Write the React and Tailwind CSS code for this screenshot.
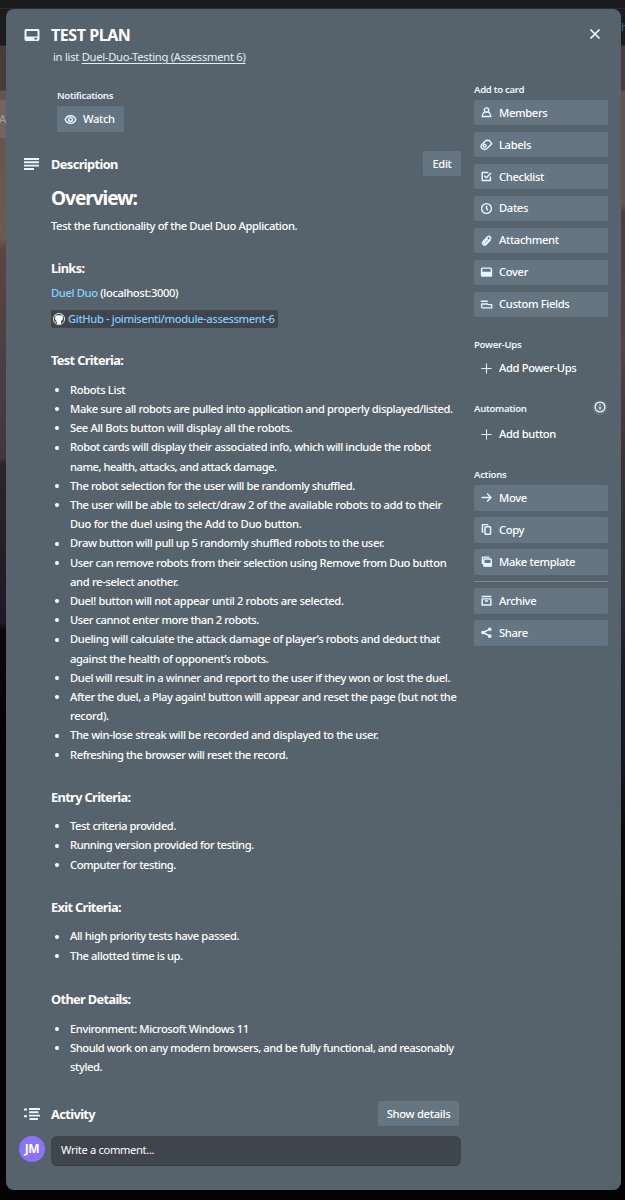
const ICONS = {
  members: <><circle cx="8" cy="5" r="2.7"/><path d="M5.9 7.2C3.8 8.5 2.6 10.5 2.6 12.8h10.8c0-2.3-1.2-4.3-3.3-5.6"/></>,
  labels: <><path d="M2 8.2 7.6 2.8l3.9.2 3 4.2-5.8 5.7C6.5 14.9 3.3 14 2.2 12.5S1.2 9.3 2 8.2Z"/><circle cx="5.7" cy="9.5" r="1.7"/></>,
  checklist: <><path d="M12.8 8v4.8H2.7V3h7.6"/><path d="m5.3 7 2.5 2.6 5.7-6"/></>,
  dates: <><circle cx="8" cy="8" r="6"/><path d="M8 4.2V8l1.8 2.2"/></>,
  attachment: <path d="m12.9 7.2-5.2 5.3c-2.5 2.5-6.3-.8-3.9-3.3l5.6-5.7c2-2 5 .8 3 2.8l-5 5c-1.2 1.2-3-.4-1.8-1.6l4-4"/>,
  cover: <><rect x="2" y="2.6" width="12" height="9.4" rx="1"/><path fill="currentColor" d="M2 8h12v4H2z"/></>,
  fields: <path strokeWidth="1.6" d="M1 4h8.500M2 7.400h7.500l1 .8h4v4H3.200L2 11.200z"/>,
  plus: <path strokeWidth="1.3" d="M8 1.8v12.4M1.8 8h12.4"/>,
  move: <path d="M2 8h11.5M8.8 3.2 13.6 8l-4.8 4.8"/>,
  copy: <><path d="M4.2 11H3V2h6.5v1"/><rect x="6.2" y="4.5" width="6.8" height="9.3" rx="1"/></>,
  template: <><path d="M3 11.2V2.6h8.6"/><rect x="4.7" y="4.8" width="9.2" height="8.6" rx="1"/><path fill="currentColor" d="M5 10.6h8.7v3H5z"/></>,
  archive: <path d="M2 3h12M2.7 6h10.6v7.5H2.7zM6 8.7h4"/>,
  share: <><path d="M12 3.8 4 8l8 4.5"/><circle cx="12" cy="4" r="1.4" fill="currentColor"/><circle cx="3.8" cy="8" r="1.4" fill="currentColor"/><circle cx="12" cy="12.4" r="1.4" fill="currentColor"/></>,
  eye: <><path d="M1.5 8C4 1.7 12 1.7 14.5 8 12 14.3 4 14.3 1.5 8Z"/><circle cx="8" cy="8" r="2.3"/></>,
};

function Icon({ name }) {
  return (
    <svg viewBox="0 0 16 16" className="h-[13px] w-[13px] shrink-0 text-[#eaf5ff]" fill="none" stroke="currentColor" strokeWidth="1.8" strokeLinejoin="round">
      {ICONS[name]}
    </svg>
  );
}

function SideButton({ icon, label, low = false, tall = false, plain = false }) {
  return (
    <button className={`flex w-full shrink-0 items-center rounded-[2px] pb-px pl-[6px] ${tall ? "h-[26px] mb-[6px]" : "h-[25px] mb-[7px]"} ${plain ? "" : "bg-[#657582]"}`}>
      <Icon name={icon} />
      <span className={`ml-[6px] whitespace-nowrap ${low ? "pt-[2px]" : "pt-px"}`}>{label}</span>
    </button>
  );
}

function SideLabel({ children, className }) {
  return <div className={`text-[9.6px] leading-[15px] font-semibold tracking-[-0.32px] whitespace-nowrap text-[#eaf5ff] ${className}`}>{children}</div>;
}

function Heading({ children, className }) {
  return <h3 className={`h-[20px] text-[12.8px] font-bold leading-[20px] tracking-[-0.65px] whitespace-nowrap ${className}`}>{children}</h3>;
}

function BulletList({ items, className }) {
  return (
    <ul className={`leading-[19.2px] tracking-[-0.4px] ${className}`}>
      {items.map((lines) => (
        <li key={lines[0][0]} className="flex">
          <span className="mt-[8.2px] mr-[10px] ml-[4px] h-[4px] w-[4px] shrink-0 rounded-full bg-white" />
          <span className="ml-px">
            {lines.map(([text, track]) => (
              <span key={text} className={`block whitespace-nowrap ${track || ""}`}>{text}</span>
            ))}
          </span>
        </li>
      ))}
    </ul>
  );
}

const TESTS = [
  [["Robots List", "tracking-[-0.35px]"]],
  [["Make sure all robots are pulled into application and properly displayed/listed.", "tracking-[-0.39px]"]],
  [["See All Bots button will display all the robots.", "tracking-[-0.36px]"]],
  [["Robot cards will display their associated info, which will include the robot", "tracking-[-0.39px]"], ["name, health, attacks, and attack damage.", "tracking-[-0.5px]"]],
  [["The robot selection for the user will be randomly shuffled.", "tracking-[-0.42px]"]],
  [["The user will be able to select/draw 2 of the available robots to add to their", "tracking-[-0.36px]"], ["Duo for the duel using the Add to Duo button.", "tracking-[-0.32px]"]],
  [["Draw button will pull up 5 randomly shuffled robots to the user.", "tracking-[-0.38px]"]],
  [["User can remove robots from their selection using Remove from Duo button", "tracking-[-0.43px]"], ["and re-select another.", "tracking-[-0.34px]"]],
  [["Duel! button will not appear until 2 robots are selected.", "tracking-[-0.37px]"]],
  [["User cannot enter more than 2 robots.", "tracking-[-0.45px]"]],
  [["Dueling will calculate the attack damage of player’s robots and deduct that"], ["against the health of opponent’s robots."]],
  [["Duel will result in a winner and report to the user if they won or lost the duel.", "tracking-[-0.39px]"]],
  [["After the duel, a Play again! button will appear and reset the page (but not the", "tracking-[-0.39px]"], ["record).", "tracking-[-0.3px]"]],
  [["The win-lose streak will be recorded and displayed to the user.", "tracking-[-0.36px]"]],
  [["Refreshing the browser will reset the record.", "tracking-[-0.43px]"]],
];
const ENTRY = [[["Test criteria provided.", "tracking-[-0.43px]"]], [["Running version provided for testing.", "tracking-[-0.42px]"]], [["Computer for testing.", "tracking-[-0.47px]"]]];
const EXIT = [[["All high priority tests have passed."]], [["The allotted time is up."]]];
const OTHER = [[["Environment: Microsoft Windows 11", "tracking-[-0.42px]"]], [["Should work on any modern browsers, and be fully functional, and reasonably", "tracking-[-0.44px]"], ["styled."]]];

export default function App() {
  return (
    <div className="relative h-[1200px] w-[625px] overflow-hidden bg-[linear-gradient(180deg,#1b1c1e_0,#1b1c1e_45px,#493a3c_46px,#4b3b3c_90px,#655450_91px,#6b5b50_238px,#5a4544_250px,#493a44_400px,#43353f_458px,#28262e_464px,#1c1b25_622px,#0a0a0e_630px,#030307_760px,#030306_1200px)] px-[6px] pt-[9px] font-['Noto_Sans','Open_Sans',sans-serif] text-[11.2px] font-medium tracking-[-0.35px] text-white">
      <div className="absolute top-0 left-[615px] h-[1190px] w-[10px] bg-[linear-gradient(180deg,#1b1c1e_0,#1b1c1e_45px,#493c3e_46px,#493c3e_90px,#65534f_91px,#65534f_205px,#4a3d42_212px,#5a3e42_350px,#3d3238_450px,#2a2830_600px,#181c26_670px,#141820_760px,#0b0608_840px,#030306_950px)]" />
      <div className="absolute top-0 left-0 h-[9px] w-full border-b border-[#2a2c2f] bg-[#1b1c1e]" />
      <div className="absolute top-[100px] left-0 h-[38px] w-[6px] overflow-hidden bg-[#746361] leading-[38px] text-[#a69b9a]"><span className="-ml-[1px]">A</span></div>
      <div className="absolute top-[19px] left-[621px] text-[#315d8a]">h</div>
      <main className="relative flex h-[1181px] w-[615px] rounded-[8px] bg-[#57636c]">
        <div className="w-[455px] shrink-0 pl-[45px]">
          <header className="flex h-[68px] flex-col pt-[14px]">
            <div className="-ml-[28px] flex h-[24px] items-center">
              <svg viewBox="0 0 16 12" className="ml-px h-[12px] w-[16px]"><path fillRule="evenodd" fill="#e8f4ff" d="M2 0h12q1.5 0 1.5 2v8q0 2-1.5 2H2Q.5 12 .5 10V2Q.5 0 2 0Zm.5 2v5.5h11V2Zm8 6.8V10.500h2.500V8.800Z"/></svg>
              <h1 className="ml-[11px] text-[16px] font-bold tracking-[-0.45px]">TEST PLAN</h1>
            </div>
            <p className="ml-[2px] h-[20px] leading-[20px] font-normal tracking-[-0.27px] whitespace-nowrap text-[#e3edf7]">in list <u className="underline-offset-2">Duel-Duo-Testing (Assessment 6)</u></p>
          </header>
          <div className="ml-[6px] h-[74px] pt-[11px]">
            <SideLabel className="h-[18px]">Notifications</SideLabel>
            <button className="flex h-[26px] w-[67px] items-center rounded-[2px] bg-[#657582] pl-[7px]"><Icon name="eye" /><span className="ml-[6px]">Watch</span></button>
          </div>
          <div className="-ml-[27px] flex h-[25px] items-center">
            <svg viewBox="0 0 15 12" className="h-[12px] w-[15px]" stroke="#e8f4ff" strokeWidth="1.9"><path d="M0 1h15M0 4.300h15M0 7.600h15M0 11h10"/></svg>
            <h2 className="ml-[12px] pt-[2px] text-[12.8px] font-bold tracking-[-0.6px]">Description</h2>
            <button className="ml-auto h-[25px] w-[38px] rounded-[2px] bg-[#657582] pt-[2px]">Edit</button>
          </div>
          <h2 className="mt-[8px] h-[27px] text-[19.2px] leading-[27px] font-bold whitespace-nowrap tracking-[-1.1px]">Overview:</h2>
          <p className="mt-[5px] h-[20px] leading-[20px] tracking-[-0.38px] whitespace-nowrap">Test the functionality of the Duel Duo Application.</p>
          <Heading className="mt-[22px]">Links:</Heading>
          <p className="mt-[5px] h-[20px] leading-[20px] tracking-[-0.37px] whitespace-nowrap"><a className="text-[#85d2ff]">Duel Duo</a> (localhost:3000)</p>
          <a className="mt-[7px] flex h-[18px] w-[227px] items-center rounded-[2px] bg-[#3e454d] pl-[2px] whitespace-nowrap text-[#85c9ff]">
            <svg viewBox="0 0 24 24" className="mr-[3px] h-[12px] w-[12px] shrink-0 text-white"><circle cx="12" cy="12" r="11.2" fill="none" stroke="currentColor" strokeWidth="1.600"/><path fill="currentColor" d="M8 22v-4c-2 .5-3-.5-4-2 2 0 2 1 4 .5v-.8C5 15 4 13 4 10c0-1 .4-2 1-3V4l3 1q4-1 8 0l3-1v3c.6 1 1 2 1 3 0 3-1 5-4 5.700V22Z"/></svg>
            <span className="tracking-[-0.38px]">GitHub - joimisenti/module-assessment-6</span>
          </a>
          <Heading className="mt-[22px]">Test Criteria:</Heading>
          <BulletList className="-mb-[0.4px] mt-[9.8px]" items={TESTS} />
          <Heading className="mt-[23.6px]">Entry Criteria:</Heading>
          <BulletList className="mt-[9.2px]" items={ENTRY} />
          <Heading className="mt-[22.8px]">Exit Criteria:</Heading>
          <BulletList className="mt-[9.8px]" items={EXIT} />
          <Heading className="mt-[23.8px]">Other Details:</Heading>
          <BulletList className="mt-[10px]" items={OTHER} />
          <div className="-ml-[27px] mt-[25px] flex h-[25px] items-center">
            <svg viewBox="0 0 16 12" className="h-[12px] w-[16px]" stroke="#e8f4ff" strokeWidth="1.9"><path d="M5 1h11M5 4.300h9.500M5 7.600h11M5.500 11h8.500M0 1.500h3M0 8.200h3" /></svg>
            <h2 className="ml-[11px] pt-px text-[12.8px] font-bold tracking-[-0.6px]">Activity</h2>
            <button className="mr-[2px] ml-auto h-[25px] w-[81px] rounded-[2px] bg-[#657582] pt-px tracking-[-0.3px]">Show details</button>
          </div>
          <div className="-ml-[32px] mt-[10px] flex">
            <div className="flex h-[26px] w-[26px] shrink-0 items-center justify-center rounded-full bg-[#8b72fa] text-[12px] font-bold">JM</div>
            <div className="ml-[6px] h-[30px] w-[410px] rounded-[6px] border-b border-[#343a42] bg-[#3e454d] pl-[10px] leading-[28px] font-normal">Write a comment...</div>
          </div>
        </div>
        <aside className="ml-[13px] w-[134px] pt-[73px]">
          <SideLabel className="h-[18px]">Add to card</SideLabel>
          <SideButton low icon="members" label="Members" />
          <SideButton low icon="labels" label="Labels" />
          <SideButton low icon="checklist" label="Checklist" />
          <SideButton icon="dates" label="Dates" />
          <SideButton icon="attachment" label="Attachment" />
          <SideButton icon="cover" label="Cover" />
          <SideButton icon="fields" label="Custom Fields" />
          <SideLabel className="mt-[20px] h-[19px]">Power-Ups</SideLabel>
          <SideButton plain icon="plus" label="Add Power-Ups" />
          <SideLabel className="mt-[20px] flex h-[21px] justify-between">Automation
            <svg viewBox="0 0 16 16" className="h-[16px] w-[16px]" fill="none" stroke="#eaf5ff"><circle cx="8" cy="6.500" r="7.700" fill="#65727c" stroke="none"/><circle cx="8" cy="6" r="4.900" strokeWidth="1.300"/><path strokeWidth="1.300" d="M8 5.400v3.400M8 3.200v1.100"/></svg>
          </SideLabel>
          <SideButton plain icon="plus" label="Add button" />
          <SideLabel className="mt-[20px] h-[18px]">Actions</SideLabel>
          <SideButton tall icon="move" label="Move" />
          <SideButton tall icon="copy" label="Copy" />
          <SideButton tall icon="template" label="Make template" />
          <div className="mb-[6px] h-px bg-[#7b8993]" />
          <SideButton tall icon="archive" label="Archive" />
          <SideButton tall icon="share" label="Share" />
        </aside>
        <svg viewBox="0 0 12 12" className="absolute top-[19px] right-[20px] h-[12px] w-[12px]" stroke="white" strokeWidth="1.6"><path d="m1.5 1.5 9 9m0-9-9 9"/></svg>
      </main>
    </div>
  );
}
